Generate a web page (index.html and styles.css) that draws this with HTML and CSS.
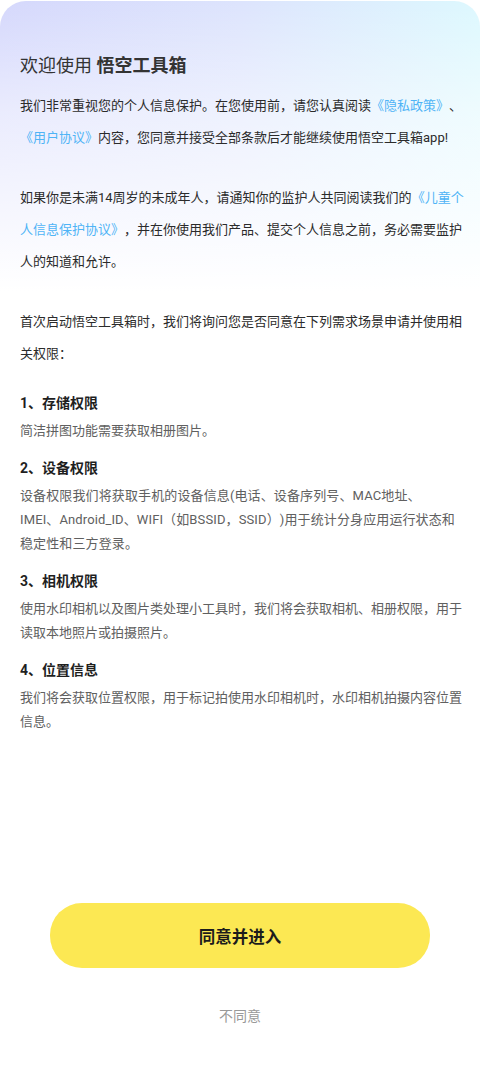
FILE: index.html
```html
<!DOCTYPE html>
<html lang="zh-CN">
<head>
<meta charset="utf-8">
<meta name="viewport" content="width=480">
<title>悟空工具箱</title>
<link rel="stylesheet" href="styles.css">
</head>
<body>
<div class="card">
  <h1 class="title">欢迎使用 <b>悟空工具箱</b></h1>
  <p class="para">我们非常重视您的个人信息保护。在您使用前，请您认真阅读<span class="link">《隐私政策》</span>、<span class="link">《用户协议》</span>内容，您同意并接受全部条款后才能继续使用悟空工具箱app!</p>
  <p class="para gap">如果你是未满14周岁的未成年人，请通知你的监护人共同阅读我们的<span class="link">《儿童个人信息保护协议》</span>，并在你使用我们产品、提交个人信息之前，务必需要监护人的知道和允许。</p>
  <p class="para gap">首次启动悟空工具箱时，我们将询问您是否同意在下列需求场景申请并使用相关权限：</p>

  <div class="perms">
    <div class="perm">
      <h2 class="perm-title">1、存储权限</h2>
      <p class="perm-desc">简洁拼图功能需要获取相册图片。</p>
    </div>
    <div class="perm">
      <h2 class="perm-title">2、设备权限</h2>
      <p class="perm-desc wide">设备权限我们将获取手机的设备信息(电话、设备序列号、MAC地址、<br>IMEI、Android_ID、WIFI（如BSSID，SSID）)用于统计分身应用运行状态和稳定性和三方登录。</p>
    </div>
    <div class="perm">
      <h2 class="perm-title">3、相机权限</h2>
      <p class="perm-desc">使用水印相机以及图片类处理小工具时，我们将会获取相机、相册权限，用于读取本地照片或拍摄照片。</p>
    </div>
    <div class="perm">
      <h2 class="perm-title">4、位置信息</h2>
      <p class="perm-desc">我们将会获取位置权限，用于标记拍使用水印相机时，水印相机拍摄内容位置信息。</p>
    </div>
  </div>

  <div class="footer">
    <button class="agree">同意并进入</button>
    <button class="disagree">不同意</button>
  </div>
</div>
</body>
</html>
```

FILE: styles.css
```css
* { box-sizing: border-box; }
html, body {
  margin: 0;
  padding: 0;
  background: #ffffff;
}
body {
  font-family: Roboto, "Noto Sans CJK SC", "Noto Sans", sans-serif;
  color: #333333;
  text-spacing-trim: space-all;
}
.card {
  margin-top: 1px;
  min-height: 1066px;
  border-radius: 26px 26px 0 0;
  padding: 53px 16px 39px 20px;
  display: flex;
  flex-direction: column;
  background:
    linear-gradient(to bottom, rgba(255,255,255,0) 0px, rgba(255,255,255,0.5) 110px, #ffffff 290px),
    linear-gradient(to right, #d5d8fc 0%, #dde4fd 50%, #ddf8fe 100%);
}
.title {
  margin: 0;
  font-size: 18px;
  line-height: 24px;
  font-weight: 400;
  color: #333333;
}
.title b { font-weight: 700; }
.para {
  margin: 12px 0 0;
  font-size: 13px;
  line-height: 32px;
  color: #2b2b2b;
}
.para.gap { margin-top: 28px; }
.link {
  color: #4fb4f6;
}
.perms {
  display: flex;
  flex-direction: column;
  gap: 14px;
  margin-top: 22px;
}
.perm {
  display: flex;
  flex-direction: column;
  gap: 5px;
}
.perm-title {
  margin: 0;
  font-size: 14px;
  line-height: 22px;
  font-weight: 700;
  color: #1f1f1f;
}
.perm-desc {
  margin: 0;
  font-size: 13px;
  line-height: 24px;
  color: #606060;
}
.perm-desc.wide {
  letter-spacing: 0.12px;
}
.footer {
  margin-top: auto;
  display: flex;
  flex-direction: column;
  align-items: center;
  padding: 0 34px 0 30px;
}
.agree {
  width: 100%;
  height: 65px;
  border: none;
  border-radius: 32px;
  background: #fce853;
  font-family: Roboto, "Noto Sans CJK SC", sans-serif;
  font-size: 16.5px;
  font-weight: 700;
  color: #1c1c1c;
  padding: 0;
}
.disagree {
  margin-top: 36px;
  border: none;
  background: none;
  font-family: Roboto, "Noto Sans CJK SC", sans-serif;
  font-size: 14px;
  line-height: 24px;
  color: #999999;
  padding: 0;
}
```
